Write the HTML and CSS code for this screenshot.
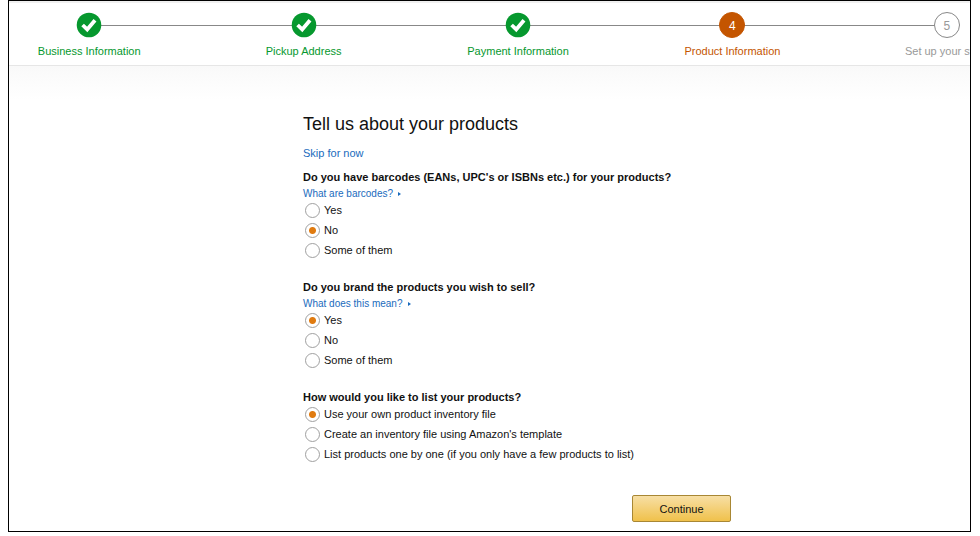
FILE: index.html
```html
<!DOCTYPE html>
<html lang="en">
  <head>
    <meta charset="utf-8">
    <title>Product Information</title>
    <link rel="stylesheet" href="styles.css">
  </head>
  <body>
    <div class="page">
      <header class="progress">
        <ol class="steps">
          <li class="step done">
            <svg class="step-icon" viewBox="0 0 26 26">
              <circle cx="13" cy="13" r="12.3" fill="#06982e" />
              <path d="M6.6 13l4.6 4.4 7.8-9.2" fill="none" stroke="#fff" stroke-width="3.8" />
            </svg>
            <span class="step-label">Business Information</span>
          </li>
          <li class="step done">
            <svg class="step-icon" viewBox="0 0 26 26">
              <circle cx="13" cy="13" r="12.3" fill="#06982e" />
              <path d="M6.6 13l4.6 4.4 7.8-9.2" fill="none" stroke="#fff" stroke-width="3.8" />
            </svg>
            <span class="step-label">Pickup Address</span>
          </li>
          <li class="step done">
            <svg class="step-icon" viewBox="0 0 26 26">
              <circle cx="13" cy="13" r="12.3" fill="#06982e" />
              <path d="M6.6 13l4.6 4.4 7.8-9.2" fill="none" stroke="#fff" stroke-width="3.8" />
            </svg>
            <span class="step-label">Payment Information</span>
          </li>
          <li class="step current">
            <span class="step-icon">4</span>
            <span class="step-label">Product Information</span>
          </li>
          <li class="step">
            <span class="step-icon">5</span>
            <span class="step-label">Set up your store</span>
          </li>
        </ol>
      </header>

      <main class="content">
        <form class="form">
          <h1 class="title">Tell us about your products</h1>
          <a class="skip" href="#">Skip for now</a>

          <fieldset class="question">
            <legend>Do you have barcodes (EANs, UPC's or ISBNs etc.) for your products?</legend>
            <a class="help" href="#">What are barcodes?</a>
            <label class="option"><input type="radio" name="barcodes"> Yes</label>
            <label class="option"><input type="radio" name="barcodes" checked> No</label>
            <label class="option"><input type="radio" name="barcodes"> Some of them</label>
          </fieldset>

          <fieldset class="question">
            <legend>Do you brand the products you wish to sell?</legend>
            <a class="help" href="#">What does this mean?</a>
            <label class="option"><input type="radio" name="brand" checked> Yes</label>
            <label class="option"><input type="radio" name="brand"> No</label>
            <label class="option"><input type="radio" name="brand"> Some of them</label>
          </fieldset>

          <fieldset class="question">
            <legend>How would you like to list your products?</legend>
            <label class="option"><input type="radio" name="listing" checked> Use your own product inventory file</label>
            <label class="option"><input type="radio" name="listing"> Create an inventory file using Amazon's template</label>
            <label class="option"><input type="radio" name="listing"> List products one by one (if you only have a few products to list)</label>
          </fieldset>

          <div class="actions">
            <button class="continue" type="button">Continue</button>
          </div>
        </form>
      </main>
    </div>
  </body>
</html>
```
FILE: styles.css
```css
* {
  box-sizing: border-box;
}

body {
  margin: 0 9px 4px 8px;
  font-family: "Liberation Sans", Arial, sans-serif;
  font-size: 11px;
  color: #111;
  background: #fff;
}

a {
  color: #1a6bbd;
  text-decoration: none;
}

.page {
  border: 1px solid #000;
  overflow: hidden;
}

.progress {
  padding-top: 9px;
  height: 65px;
  border-top: 2px solid #f0f0f0;
  border-bottom: 1px solid #e6e6e6;
}

/* both are wider than the page and get cut off on the right */
.steps,
.content {
  margin: 0 -84px 0 -27px;
}

.steps {
  display: flex;
  padding: 0;
  list-style: none;
}

.step {
  flex: 1;
  display: flex;
  flex-direction: column;
  align-items: center;
  gap: 5px;
  position: relative;
  color: #999;
}

.step + .step::before {
  content: "";
  position: absolute;
  top: 13px;
  right: 50%;
  width: 100%;
  height: 1px;
  background: #888;
}

.step-icon {
  display: block;
  position: relative;
  z-index: 1;
  width: 26px;
  height: 26px;
  border-radius: 50%;
  font-size: 12px;
  line-height: 26px;
  text-align: center;
}

span.step-icon {
  border: 1px solid #888;
  background: #fff;
}

.step-label {
  line-height: 16px;
}

.done {
  color: #06982e;
}

.current {
  color: #c45500;
}

.current span.step-icon {
  border-color: #c45500;
  background: #c45500;
  color: #fff;
}

.content {
  padding: 46px 22px 9px 20px;
  background: linear-gradient(#f9f9f9, #fff 34px);
}

.form {
  width: 428px;
  margin: 0 auto;
}

.title {
  margin: 0 0 9px;
  font-size: 18px;
  font-weight: normal;
  line-height: 24px;
}

.skip {
  display: block;
  margin-bottom: 9px;
  line-height: 16px;
}

.question {
  margin: 0 0 20px;
  padding: 0;
  border: 0;
}

.question legend {
  padding: 0;
  font-weight: bold;
  line-height: 14px;
}

.help {
  display: flex;
  align-items: center;
  gap: 5px;
  padding-top: 4px;
  font-size: 10px;
  line-height: 12px;
}

.help::after {
  content: "";
  border: 2px solid transparent;
  border-left: 3px solid #1a6bbd;
  border-right: 0;
}

.option {
  display: flex;
  align-items: center;
  gap: 4px;
  height: 20px;
  padding-left: 2px;
}

.option input {
  appearance: none;
  width: 15px;
  height: 15px;
  margin: 0;
  border: 1px solid #a0a0a0;
  border-radius: 50%;
  background: #fff;
}

.option input:checked {
  background: radial-gradient(circle, #e07b10 3px, #fff 4px);
}

.actions {
  display: flex;
  justify-content: flex-end;
  padding-top: 11px;
}

.continue {
  width: 99px;
  height: 27px;
  padding: 0;
  border: 1px solid #a88734;
  border-radius: 2px;
  background: linear-gradient(#f7dfa5, #f0c14b);
  font: inherit;
  color: #111;
}
```
